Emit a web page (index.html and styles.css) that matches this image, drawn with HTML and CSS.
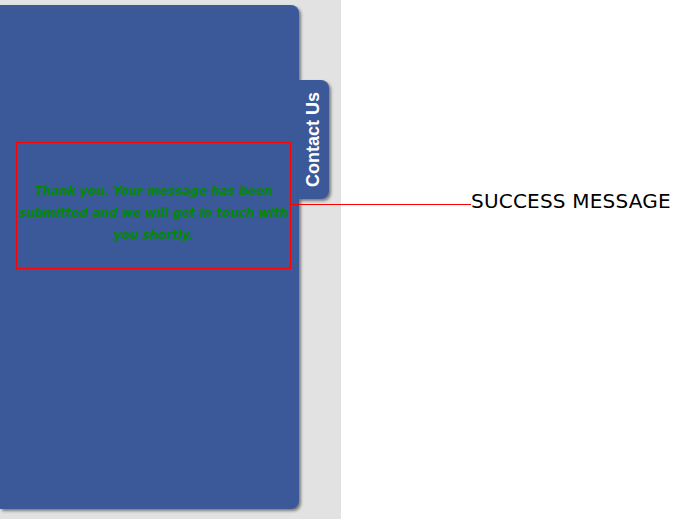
FILE: index.html
```html
<!DOCTYPE html>
<html>
<head>
<meta charset="utf-8">
<link rel="stylesheet" href="styles.css">
</head>
<body>
<div class="stage">
  <div class="column">
    <div class="panel">
      <div class="success">Thank you. Your message has been submitted and we will get in touch with you shortly.</div>
    </div>
    <div class="tab"><span class="tab-label">Contact Us</span></div>
  </div>
  <div class="callout">
    <div class="callout-line"></div>
    <div class="callout-label">SUCCESS MESSAGE</div>
  </div>
</div>
</body>
</html>
```
FILE: styles.css
```css
html, body {
  margin: 0;
  padding: 0;
  background: #ffffff;
}
.stage {
  position: relative;
  width: 694px;
  height: 519px;
  overflow: hidden;
}
.column {
  position: relative;
  width: 341px;
  height: 519px;
  background: #e2e2e2;
  padding-top: 5px;
  box-sizing: border-box;
}
.panel {
  width: 299px;
  height: 504px;
  background: #3b5998;
  border-radius: 0 8px 8px 0;
  box-shadow: 2px 2px 3px rgba(0, 0, 0, 0.45);
  padding: 137px 0 0 16px;
  box-sizing: border-box;
}
.success {
  width: 275px;
  height: 127px;
  box-sizing: border-box;
  border: 1px solid #ff0000;
  padding: 37px 0 0 0;
  text-align: center;
  font-family: "DejaVu Sans", sans-serif;
  font-weight: bold;
  font-style: oblique;
  font-size: 12px;
  line-height: 22px;
  color: #008a00;
}
.tab {
  position: absolute;
  left: 298px;
  top: 80px;
  width: 31px;
  height: 119px;
  background: #3b5998;
  border-radius: 0 8px 8px 0;
  box-shadow: 2px 2px 3px rgba(0, 0, 0, 0.45);
  display: flex;
  align-items: center;
  justify-content: center;
}
.tab-label {
  transform: rotate(-90deg);
  white-space: nowrap;
  color: #ffffff;
  font-family: "Liberation Sans", Arial, sans-serif;
  font-weight: bold;
  font-size: 18px;
}
.callout {
  position: absolute;
  left: 291px;
  top: 189px;
  display: flex;
  align-items: flex-start;
}
.callout-line {
  width: 180px;
  height: 1px;
  margin-top: 15px;
  background: #ff0000;
}
.callout-label {
  font-family: "DejaVu Sans", sans-serif;
  font-size: 20px;
  letter-spacing: 0.2px;
  color: #000000;
  line-height: 24px;
}
```
